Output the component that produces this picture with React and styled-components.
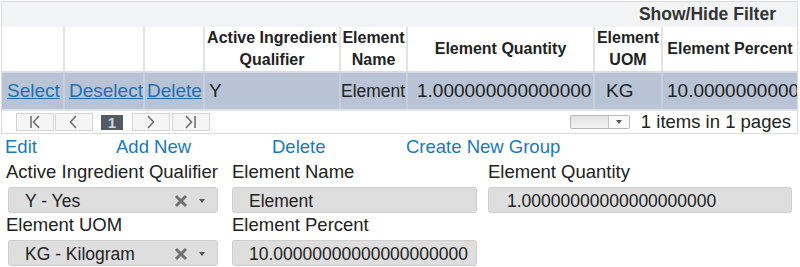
import React from 'react';
import styled, { createGlobalStyle } from 'styled-components';

const Global = createGlobalStyle`
  body {
    margin: 0;
    background: #fff;
    font-family: "Liberation Sans", Arial, sans-serif;
    color: #222;
  }
`;

const Page = styled.div`
  width: 800px;
  height: 267px;
  overflow: hidden;
  padding: 1px 0 0 1px;
  box-sizing: border-box;
`;

const Grid = styled.div`
  width: 797px;
  border: 1px solid #dcdcdc;
  box-sizing: border-box;
`;

const FilterBar = styled.div`
  height: 25px;
  background: #f2f3f5;
  display: flex;
  align-items: center;
  justify-content: flex-end;
  padding-right: 21px;
  font-size: 17.5px;
  font-weight: bold;
  color: #333;
`;

const Table = styled.table`
  border-collapse: collapse;
  table-layout: fixed;
  width: 795px;
`;

const Th = styled.th`
  height: 43px;
  padding: 0 1px;
  font-size: 16px;
  font-weight: bold;
  line-height: 22px;
  text-align: center;
  color: #222;
  overflow: hidden;
  border-left: 2px solid #e2e2e2;
  border-bottom: 2px solid #d6dae2;
  &:first-child {
    border-left: none;
  }
`;

const Td = styled.td`
  height: 36px;
  padding: 0 ${(p) => (p.align === 'right' ? 1 : 0)}px 0 ${(p) => p.pl || 0}px;
  font-size: ${(p) => p.size || 19}px;
  white-space: nowrap;
  overflow: hidden;
  background: #b8c4d6;
  text-align: ${(p) => p.align || 'left'};
  border-left: 2px solid #c8cfdb;
  border-bottom: 2px solid #dfe2e8;
  &:first-child {
    border-left: none;
  }
`;

const RowLink = styled.a`
  color: #1f6fb0;
  text-decoration: underline;
  cursor: pointer;
`;

const Pager = styled.div`
  height: 22px;
  display: flex;
  align-items: center;
  padding: 0 6px 0 14px;
`;

const PageBtn = styled.div`
  width: 38px;
  height: 18px;
  margin-right: ${(p) => p.mr || 1}px;
  background: #f5f5f5;
  border: 1px solid #d4d4d4;
  box-sizing: border-box;
  display: flex;
  align-items: center;
  justify-content: center;
`;

const CurrentPage = styled.div`
  width: 22px;
  height: 15px;
  margin: 0 9px 0 7px;
  background: #555a62;
  color: #c8d6ea;
  font-size: 15px;
  font-weight: bold;
  line-height: 15px;
  text-align: center;
`;

const Spacer = styled.div`
  flex: 1;
`;

const SizeSelect = styled.div`
  width: 60px;
  height: 14px;
  border: 1px solid #b8b8b8;
  border-radius: 2px;
  background: linear-gradient(#e2e2e2, #f4f4f4);
  box-sizing: border-box;
  display: flex;
  justify-content: flex-end;
  margin-right: 11px;
`;

const SelectArrow = styled.div`
  width: 20px;
  border-left: 1px solid #c4c4c4;
  background: #fafafa;
  display: flex;
  align-items: center;
  justify-content: center;
`;

const PagerInfo = styled.span`
  font-size: 18.5px;
  color: #222;
`;

const Actions = styled.div`
  display: grid;
  grid-template-columns: 111px 156px 134px auto;
  padding: 0 0 0 4px;
  height: 26px;
  align-items: center;
`;

const ActionLink = styled.a`
  color: #1a7ab8;
  font-size: 18.5px;
  cursor: pointer;
`;

const Form = styled.div`
  display: grid;
  grid-template-columns: 226px 256px 305px;
  padding-left: 5px;
`;

const Field = styled.div`
  display: flex;
  flex-direction: column;
`;

const Label = styled.label`
  font-size: 18.5px;
  color: #222;
  height: 27px;
  line-height: 24px;
  box-sizing: border-box;
`;

const InputBox = styled.div`
  width: ${(p) => p.w}px;
  height: 26px;
  margin-left: ${(p) => p.ml || 0}px;
  box-sizing: border-box;
  border: 1px solid #cfcfcf;
  border-radius: 3px;
  background: #dedede;
  display: flex;
  align-items: center;
  padding: 2px 0 0 ${(p) => p.pl || 16}px;
  font-size: 17.5px;
  color: #222;
`;

const InputText = styled.span`
  flex: 1;
`;

const ClearIcon = styled.svg`
  margin-right: 11px;
`;

const Caret = styled.span`
  width: 0;
  height: 0;
  border-left: 3.5px solid transparent;
  border-right: 3.5px solid transparent;
  border-top: 4px solid #555;
  margin-right: ${(p) => p.mr ?? 12}px;
`;

const Arrow = ({ d }) => (
  <svg width="16" height="14" viewBox="0 0 16 14">
    <path d={d} stroke="#6a6a6a" strokeWidth="1.5" fill="none" />
  </svg>
);

const columns = [
  { w: 62, label: '' },
  { w: 80, label: '' },
  { w: 60, label: '' },
  { w: 136, label: 'Active Ingredient Qualifier' },
  { w: 67, label: 'Element Name' },
  { w: 187, label: 'Element Quantity' },
  { w: 68, label: 'Element UOM' },
  { w: 135, label: 'Element Percent' },
];

const Select = ({ value }) => (
  <InputBox w={210} ml={2}>
    <InputText>{value}</InputText>
    <ClearIcon width="14" height="14" viewBox="0 0 14 14">
      <path d="M2 2 L12 12 M12 2 L2 12" stroke="#707070" strokeWidth="3" />
    </ClearIcon>
    <Caret />
  </InputBox>
);

const App = () => (
  <Page>
    <Global />
    <Grid>
      <FilterBar>Show/Hide Filter</FilterBar>
      <Table>
        <colgroup>
          {columns.map((c, i) => (
            <col key={i} style={{ width: c.w }} />
          ))}
        </colgroup>
        <thead>
          <tr>
            {columns.map((c, i) => (
              <Th key={i}>{c.label}</Th>
            ))}
          </tr>
        </thead>
        <tbody>
          <tr>
            <Td pl={5}>
              <RowLink>Select</RowLink>
            </Td>
            <Td pl={4}>
              <RowLink>Deselect</RowLink>
            </Td>
            <Td pl={2}>
              <RowLink>Delete</RowLink>
            </Td>
            <Td pl={4}>Y</Td>
            <Td align="right" size={17.5}>
              Element
            </Td>
            <Td pl={9}>1.000000000000000</Td>
            <Td pl={11}>KG</Td>
            <Td pl={4}>10.0000000000</Td>
          </tr>
        </tbody>
      </Table>
      <Pager>
        <PageBtn>
          <Arrow d="M4 1 V13 M12 1 L6.5 7 L12 13" />
        </PageBtn>
        <PageBtn>
          <Arrow d="M10 1 L4.5 7 L10 13" />
        </PageBtn>
        <CurrentPage>1</CurrentPage>
        <PageBtn mr={2}>
          <Arrow d="M5 1 L10.5 7 L5 13" />
        </PageBtn>
        <PageBtn>
          <Arrow d="M3 1 L8.5 7 L3 13 M12 1 V13" />
        </PageBtn>
        <Spacer />
        <SizeSelect>
          <SelectArrow>
            <Caret mr={0} />
          </SelectArrow>
        </SizeSelect>
        <PagerInfo>1 items in 1 pages</PagerInfo>
      </Pager>
    </Grid>
    <Actions>
      <ActionLink>Edit</ActionLink>
      <ActionLink>Add New</ActionLink>
      <ActionLink>Delete</ActionLink>
      <ActionLink>Create New Group</ActionLink>
    </Actions>
    <Form>
      <Field>
        <Label>Active Ingredient Qualifier</Label>
        <Select value="Y - Yes" />
      </Field>
      <Field>
        <Label>Element Name</Label>
        <InputBox w={245}>Element</InputBox>
      </Field>
      <Field>
        <Label>Element Quantity</Label>
        <InputBox w={304} pl={18}>
          1.00000000000000000000
        </InputBox>
      </Field>
      <Field>
        <Label>Element UOM</Label>
        <Select value="KG - Kilogram" />
      </Field>
      <Field>
        <Label>Element Percent</Label>
        <InputBox w={245}>10.00000000000000000000</InputBox>
      </Field>
    </Form>
  </Page>
);

export default App;
